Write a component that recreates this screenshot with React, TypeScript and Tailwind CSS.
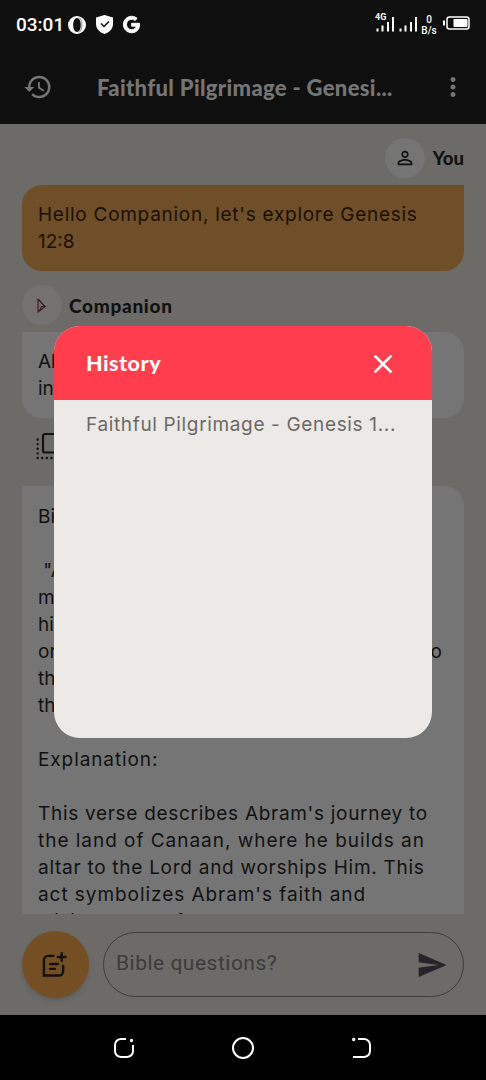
import { MdHistory, MdMoreVert, MdPersonOutline, MdClose, MdSend } from 'react-icons/md'
import { FaGoogle } from 'react-icons/fa'

const verseLines = [
  { text: 'Bible verse:' },
  { text: '' },
  { text: ' "And he removed from thence' },
  { text: 'mountain on the east of Bethel,' },
  { text: 'his tent, having Bethel on the' },
  { text: 'on the east, and he builded there', end: 'to' },
  { text: 'the LORD, and called upon' },
  { text: 'the name of the LORD."' },
  { text: '' },
  { text: 'Explanation:', className: 'tracking-[0.9px]' },
  { text: '' },
  { text: "This verse describes Abram's journey to", className: 'tracking-[0.7px]' },
  { text: 'the land of Canaan, where he builds an', className: 'tracking-[0.97px]' },
  { text: 'altar to the Lord and worships Him. This', className: 'tracking-[0.73px]' },
  { text: "act symbolizes Abram's faith and", className: 'tracking-[0.94px]' },
  { text: 'willingness to follow God and to be', className: 'tracking-[0.7px]' },
]

function StatusBar() {
  return (
    <div className="flex h-12 items-center px-4 pt-px text-white">
      <span className="w-[52px] whitespace-nowrap pt-0.5 font-[Roboto] text-[19px] font-medium">03:01</span>
      <svg className="size-[18px]" viewBox="0 0 18 18">
        <path
          fill="currentColor"
          fillRule="evenodd"
          d="M9 0a9 9 0 1 0 0 18A9 9 0 0 0 9 0Zm0 2c2.300 0 3.800 3 3.800 7s-1.500 7-3.800 7-3.800-3-3.800-7S6.700 2 9 2Z"
        />
        <path d="M11 1.500c4 3 4 12 0 15" stroke="#0f0f0f" strokeWidth="0.500" fill="none" />
      </svg>
      <svg className="ml-[9px] size-[19px]" viewBox="0 0 19 19">
        <path fill="currentColor" d="M9.500 0 18 2.500V9c0 5-4 8.500-8.500 10C5 17.500 1 14 1 9V2.500Z" />
        <path d="m6 8.500 3 3 5-5" stroke="#0f0f0f" strokeWidth="1.500" fill="none" />
      </svg>
      <FaGoogle className="ml-[9px] size-[17px] overflow-visible stroke-white" strokeWidth={28} />

      <svg className="mb-0.5 ml-auto h-6 w-[42px]" viewBox="0 0 42 24">
        <text x="0" y="8" fontSize="9" fontWeight="700" fill="white" fontFamily="Roboto">4G</text>
        <path
          d="M2.500 16.500v3M7.500 13.500v6M13 10v9.500M18 5v14.500M25.500 16.500v3M30.500 13.500v6M36 10v9.500M41 5v14.500"
          stroke="white"
          strokeWidth="2"
        />
      </svg>
      <div className="ml-[3px] w-[18px] text-center font-[Roboto] text-[10px] font-medium leading-[11px]">
        <div>0</div>
        <div>B/s</div>
      </div>
      <svg className="ml-[5px] mb-[3px] h-[14px] w-[27px]" viewBox="0 0 27 14">
        <path d="M1 4.500v5" stroke="white" strokeWidth="2" />
        <rect x="4" y="1" width="22" height="12" rx="2.500" stroke="white" strokeWidth="1.500" fill="none" />
        <rect x="10.500" y="3" width="14" height="8" rx="1" fill="white" />
      </svg>
    </div>
  )
}

function CopyIcon() {
  return (
    <svg className="h-[28px] w-[28px]" viewBox="0 0 28 28" fill="none">
      <rect x="7" y="2" width="19" height="18.500" rx="2" stroke="currentColor" strokeWidth="2.200" />
      <path
        d="M1.700 7.500v18.500h19"
        stroke="currentColor"
        strokeWidth="2.400"
        strokeLinecap="round"
        strokeDasharray="0.010 4.600"
      />
    </svg>
  )
}

function HistoryDialog() {
  return (
    <div className="absolute left-[54px] top-[326px] h-[412px] w-[378px] overflow-hidden rounded-[26px] bg-[#ede9e6]">
      <div className="flex h-[74px] items-center justify-between bg-[#ff3d4d] pl-8 pr-[33px] pt-px text-white">
        <h2 className="font-[Lato] text-[21.5px] font-black tracking-[0.5px]">History</h2>
        <MdClose className="size-8" />
      </div>
      <p className="whitespace-nowrap pl-[32px] pt-[11px] text-[19px] leading-[27px] tracking-[0.65px] text-[#6b6967]">
        Faithful Pilgrimage - Genesis 1...
      </p>
    </div>
  )
}

export default function App() {
  return (
    <div className="relative flex h-[1080px] w-[486px] flex-col overflow-hidden bg-[#6c6b67] font-[Inter] text-[#111111]">
      {/* App bar */}
      <header className="h-[124px] shrink-0 bg-[#0f0f0f]">
        <StatusBar />
        <div className="flex h-[77px] items-center pl-[23px] pr-[18px] text-[#757575]">
          <MdHistory className="size-[30px]" />
          <h1 className="ml-11 whitespace-nowrap pt-0.5 font-[Lato] text-[22px] font-black tracking-[0.33px]">
            Faithful Pilgrimage - Genesi...
          </h1>
          <MdMoreVert className="ml-auto size-[30px]" />
        </div>
      </header>

      {/* Messages */}
      <main className="h-[790px] shrink-0 overflow-hidden px-[22px] pt-[14px] text-[19px] leading-[27px]">
        <div className="flex h-10 items-center justify-end gap-2">
          <div className="flex size-10 items-center justify-center rounded-full bg-[#757575]">
            <MdPersonOutline className="size-[22px]" />
          </div>
          <span className="font-[Lato] text-[18.5px] font-black">You</span>
        </div>
        <div className="mt-[7px] h-[86px] whitespace-pre rounded-[20px] rounded-tr-none bg-[#6f4f27] p-4 text-[#1a0f05]">
          <p className="tracking-[0.73px]">Hello Companion, let's explore Genesis</p>
          <p>12:8</p>
        </div>

        <div className="mt-[14px] flex h-10 items-center gap-[7px]">
          <div className="flex size-10 items-center justify-center rounded-full bg-[#737270] pr-px">
            <svg className="h-[15px] w-[9px]" viewBox="0 0 9 15" fill="none">
              <path d="M1 1v13l7-5.500" stroke="#4c1620" strokeWidth="1.200" />
              <path d="m1 1 7 7.500H4.500L2.500 13" stroke="#2a1a1c" strokeWidth="1.100" />
            </svg>
          </div>
          <span className="font-[Lato] text-[19px] font-black tracking-[0.7px]">Companion</span>
        </div>
        <div className="mt-[7px] h-[86px] whitespace-pre rounded-[20px] rounded-tl-none bg-[#757575] p-4">
          <p>Absolutely! Let's dive</p>
          <p>into Genesis 12:8.</p>
        </div>
        <div className="flex h-[68px] items-start pl-[14px] pt-[14px]">
          <CopyIcon />
        </div>
        <div className="whitespace-pre rounded-tr-[20px] bg-[#757575] px-4 pt-[16.5px]">
          {verseLines.map((line, index) => (
            <p key={index} className={`flex h-[27px] w-[404px] justify-between ${line.className ?? ''}`}>
              {line.text}
              {line.end && <span>{line.end}</span>}
            </p>
          ))}
        </div>
      </main>

      {/* Input row */}
      <footer className="flex h-[101px] shrink-0 items-center gap-[14px] px-[22px]">
        <button className="flex size-[67px] items-center justify-center rounded-full bg-[#754f24] pr-0.5 shadow-md">
          <svg
            className="size-[25px]"
            viewBox="0 0 26 26"
            fill="none"
            stroke="#111"
            strokeWidth="2.500"
            strokeLinecap="round"
          >
            <path d="M12 4H6.500A4.500 4.500 0 0 0 2 8.500V24.500h15.500a4.500 4.500 0 0 0 4.500-4.500v-5.500" />
            <path d="M20.500 1.200v8M16.500 5.200h8M8.500 12.500h8M8.500 17.500h5" />
          </svg>
        </button>
        <div className="flex h-[65px] w-[361px] items-center justify-between rounded-full border-[1.5px] border-[#3d3d3d] pl-3 pr-[15px]">
          <span className="pb-0.5 font-[Roboto] text-[21px] tracking-[0.5px] text-[#3c3b39]">Bible questions?</span>
          <MdSend className="size-8 text-[#24242a]" />
        </div>
      </footer>

      {/* System navigation */}
      <nav className="flex h-[65px] shrink-0 items-center justify-between bg-black px-[113px] text-white">
        <svg className="size-[22px]" viewBox="0 0 22 22" fill="none" stroke="currentColor" strokeWidth="2">
          <path d="M13 2H8a6 6 0 0 0-6 6v6a6 6 0 0 0 6 6h6a6 6 0 0 0 6-6V8" />
          <circle cx="18.500" cy="3.500" r="0.700" />
        </svg>
        <svg className="size-[24px]" viewBox="0 0 24 24" fill="none" stroke="currentColor" strokeWidth="2">
          <circle cx="12" cy="12" r="10" />
        </svg>
        <svg className="size-[22px]" viewBox="0 0 22 22" fill="none" stroke="currentColor" strokeWidth="2">
          <path d="M7 2h6a6 6 0 0 1 6 6v6a6 6 0 0 1-6 6H2" />
          <circle cx="2.700" cy="2.500" r="0.700" />
        </svg>
      </nav>

      <HistoryDialog />
    </div>
  )
}
